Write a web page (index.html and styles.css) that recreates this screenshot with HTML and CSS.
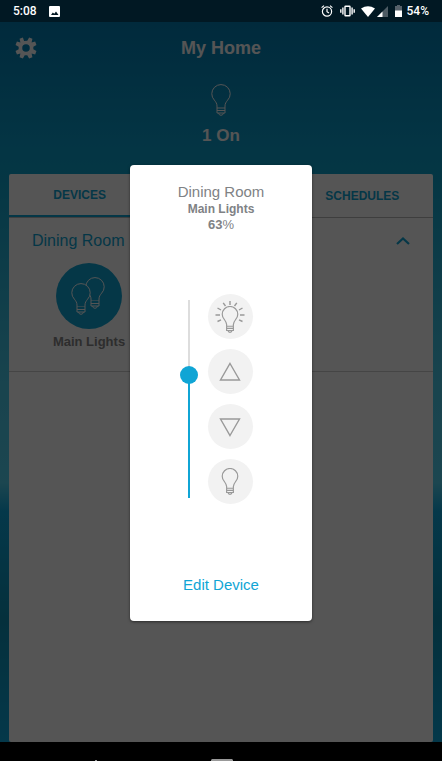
FILE: index.html
```html
<!DOCTYPE html>
<html lang="en">
<head>
<meta charset="utf-8">
<meta name="viewport" content="width=device-width, initial-scale=1">
<title>My Home</title>
<link rel="stylesheet" href="styles.css">
</head>
<body>
<svg class="defs" aria-hidden="true">
  <symbol id="bulb" viewBox="0 0 20 32">
    <path d="M6 24V22C6 19.500 4.800 18 3.400 16.200A9.200 9.200 0 1 1 16.600 16.200C15.200 18 14 19.500 14 22V24Z"/>
    <path d="M6 24V29H14V24M6 26.500H14M7.500 29Q8 31.300 10 31.300T12.500 29"/>
  </symbol>
</svg>
<div class="status">
  <span>5:08</span>
  <svg class="photo" width="11" height="11" viewBox="0 0 11 11"><path fill="#fff" fill-rule="evenodd" d="M1 0H10Q11 0 11 1V10Q11 11 10 11H1Q0 11 0 10V1Q0 0 1 0ZM2 9H9.500L7 5.500L5.300 7.800L3.800 6.500Z"/></svg>
  <div class="status-icons">
    <svg class="alarm" width="12" height="12" viewBox="0 0 12 12" fill="none" stroke="#fff" stroke-width="1.200"><circle cx="6" cy="6.500" r="4.600"/><path d="M6 3.800V6.700L8 8M.6 2.600L3 .6M9 .6L11.400 2.600"/></svg>
    <svg class="vibrate" width="15" height="12" viewBox="0 0 15 12" fill="none" stroke="#fff" stroke-width="1.400"><rect x="5" y="1.200" width="5" height="9.600" rx=".5"/><path d="M2.900 2.500V9.500M12.100 2.500V9.500M.8 4.300V7.700M14.200 4.300V7.700"/></svg>
    <svg width="14" height="11" viewBox="0 0 14 11"><path fill="#fff" d="M0 2.500Q7-2 14 2.500L7 11Z"/></svg>
    <svg width="11" height="11" viewBox="0 0 11 11"><path fill="#4d5b64" d="M11 0V11H0Z"/><path fill="#fff" d="M5.500 5.500V11H0Z"/></svg>
    <svg class="battery" width="7" height="12" viewBox="0 0 7 12"><path fill="#566069" d="M2 0H5V1H7V6H0V1H2Z"/><path fill="#fff" d="M0 5.500H7V12H0Z"/></svg>
    <span>54%</span>
  </div>
</div>
<div class="app">
  <header class="top">
    <button class="gear" type="button" aria-label="Settings">
      <svg width="22" height="22" viewBox="0 0 24 24" fill="#fff"><path fill-rule="evenodd" d="M9.900 4.300 8.600.6 5 2 5.900 5.900 2.100 5 .6 8.600 4 10.600V13.400L.6 15.400 2.100 19 5.900 18.100 5 22 8.600 23.400 10.600 20H13.400L15.400 23.400 19 22 18.100 18.100 22 19 23.400 15.400 20 13.400V10.600L23.400 8.600 22 5 18.100 5.900 19 2 15.400.6 13.400 4ZM12 7.900A4.100 4.100 0 1 1 12 16.100 4.100 4.100 0 1 1 12 7.900Z"/></svg>
    </button>
    <h1>My Home</h1>
  </header>
  <div class="summary">
    <svg class="line" width="20" height="34"><use href="#bulb"/></svg>
    <p>1 On</p>
  </div>
  <main class="panel">
    <nav class="tabs">
      <button class="tab active" type="button">DEVICES</button>
      <button class="tab last" type="button">SCHEDULES</button>
    </nav>
    <section class="room">
      <div class="room-head">
        <h2>Dining Room</h2>
        <button class="collapse" type="button" aria-label="Collapse Dining Room">
          <svg width="14" height="8" viewBox="0 0 14 8" fill="none" stroke="currentColor" stroke-width="2.200"><path d="M1 7L7 1.500L13 7"/></svg>
        </button>
      </div>
      <button class="device" type="button">
        <span class="disc">
          <svg width="36" height="40" viewBox="0 0 36 40" fill="#10a5d5" stroke="#fff" stroke-width="1"><use href="#bulb" x="14" y="0" width="20" height="34"/><use href="#bulb" x="0" y="6" width="20" height="34"/></svg>
        </span>
        <span>Main Lights</span>
      </button>
    </section>
  </main>
  <div class="overlay">
    <div class="dialog" role="dialog" aria-labelledby="room-title">
      <h2 id="room-title">Dining Room</h2>
      <h3>Main Lights</h3>
      <p class="level"><b>63</b>%</p>
      <div class="controls">
        <input class="slider" type="range" min="0" max="100" value="63" aria-label="Brightness">
        <div class="buttons">
          <button type="button" aria-label="Full on"><svg width="30" height="32" viewBox="0 0 30 32"><use href="#bulb" x="6" y="5" width="18" height="27"/><path d="M15 0V4M8.200 1.800L10.500 5M21.800 1.800L19.500 5M2.500 7L6 9M27.500 7L24 9M.5 14H5M29.500 14H25M2.500 20.500L6 18.800M27.500 20.500L24 18.800"/></svg></button>
          <button type="button" aria-label="Brighter"><svg width="22" height="20" viewBox="0 0 22 20"><path d="M11 1.500L20.500 18H1.500Z"/></svg></button>
          <button type="button" aria-label="Dimmer"><svg width="22" height="20" viewBox="0 0 22 20"><path d="M11 18.500L20.500 2H1.500Z"/></svg></button>
          <button type="button" aria-label="Off"><svg width="18" height="27"><use href="#bulb"/></svg></button>
        </div>
      </div>
      <a class="edit" href="#">Edit Device</a>
    </div>
  </div>
</div>
<div class="navbar">
  <svg width="138" height="2" viewBox="0 0 138 2"><path fill="#999" d="M0 1H2V2H0ZM116 1L117 0H137L138 1V2H116Z"/></svg>
</div>
</body>
</html>
```
FILE: styles.css
```css
* { box-sizing: border-box; }

body {
  margin: 0;
  min-height: 100vh;
  display: flex;
  flex-direction: column;
  background: #000;
  font-family: "Liberation Sans", Arial, sans-serif;
}

h1, h2, h3, p { margin: 0; font-weight: 400; }

button {
  padding: 0;
  border: 0;
  background: none;
  font: inherit;
  color: inherit;
}

svg { display: block; }

.defs { position: absolute; width: 0; height: 0; }

.status {
  height: 22px;
  padding: 0 13px;
  display: flex;
  align-items: center;
  background: #011823;
  color: #fff;
  font: 500 12px/22px Roboto, sans-serif;
}

.photo { margin-left: 12px; }

.status-icons {
  margin-left: auto;
  display: flex;
  align-items: center;
  gap: 2px;
}

.alarm { margin-right: 5px; }
.vibrate { margin-right: 4px; }
.battery { margin: 0 3px 0 5px; }

.app {
  position: relative;
  flex: 1;
  display: flex;
  flex-direction: column;
  background: linear-gradient(#037eb4, #0d9fcd 18%, #0fa3cc 22%, #4bcbea 50%, #54d2f0 64%, #0fa8de 68%, #0c90b4 83%, #0ca8de);
}

.top {
  height: 52px;
  padding: 0 15px;
  display: grid;
  grid-template-columns: 22px 1fr 22px;
  align-items: center;
  text-align: center;
  color: #fff;
}

.top h1 { font-size: 18px; font-weight: 700; }

.summary {
  padding-top: 9px;
  height: 100px;
  display: flex;
  flex-direction: column;
  align-items: center;
  gap: 9px;
  color: #fff;
  font-size: 17px;
  font-weight: 700;
  line-height: 20px;
}

.summary p { font-weight: inherit; }

.line { fill: none; stroke: #fff; }

.panel {
  flex: 1;
  margin: 0 9px;
  border-radius: 2px;
  background: #fff;
}

.tabs {
  height: 44px;
  display: grid;
  grid-template-columns: repeat(3, 1fr);
  border-bottom: 1px solid #bbb;
  color: #10a5d5;
  font-size: 12px;
  font-weight: 700;
}

.active { border-bottom: 2px solid #10a5d5; }
.last { grid-column: 3; }

.room {
  height: 154px;
  padding: 13px 23px 0;
  border-bottom: 1px solid #d0d0d0;
}

.room-head {
  display: flex;
  align-items: center;
  justify-content: space-between;
  color: #10a5d5;
}

.room-head h2 { font-size: 16px; line-height: 20px; }

.device {
  width: 76px;
  margin: 12px 0 0 19px;
  display: flex;
  flex-direction: column;
  align-items: center;
  gap: 4px;
  color: #888;
  font-size: 13px;
  font-weight: 700;
  line-height: 18px;
  white-space: nowrap;
}

.disc {
  width: 66px;
  height: 66px;
  border-radius: 50%;
  display: grid;
  place-items: center;
  background: #10a5d5;
}

.overlay {
  position: absolute;
  inset: 0;
  padding-top: 143px;
  display: flex;
  align-items: flex-start;
  justify-content: center;
  background: rgba(0, 0, 0, .667);
}

.dialog {
  width: 182px;
  padding: 18px 0 26px;
  display: flex;
  flex-direction: column;
  align-items: center;
  border-radius: 4px;
  background: #fff;
  box-shadow: 0 1px 3px rgba(0, 0, 0, .5);
  color: #808285;
}

.dialog h2 { font-size: 15px; line-height: 18px; }
.dialog h3 { font-size: 12px; line-height: 16px; font-weight: 700; }
.level { font-size: 13px; line-height: 15px; }

.controls {
  margin: 62px 0;
  padding-right: 10px;
  display: flex;
  align-items: center;
  gap: 10px;
}

.slider {
  appearance: none;
  writing-mode: vertical-lr;
  direction: rtl;
  width: 18px;
  height: 206px;
  margin: 0;
  background:
    linear-gradient(#ddd 38%, #10a5d5 38%) center / 2px 198px no-repeat;
}

.slider::-webkit-slider-thumb {
  appearance: none;
  width: 18px;
  height: 18px;
  border-radius: 50%;
  background: #10a5d5;
}

.buttons { display: grid; gap: 10px; }

.buttons button {
  width: 45px;
  height: 45px;
  border-radius: 50%;
  display: grid;
  place-items: center;
  background: #f2f2f2;
}

.buttons svg { fill: none; stroke: #999; stroke-width: 1.4; }

.edit {
  margin-top: 9px;
  color: #10a5d5;
  font-size: 15px;
  line-height: 20px;
  text-decoration: none;
}

.navbar {
  height: 19px;
  padding-left: 95px;
  display: flex;
  align-items: flex-end;
}
```
